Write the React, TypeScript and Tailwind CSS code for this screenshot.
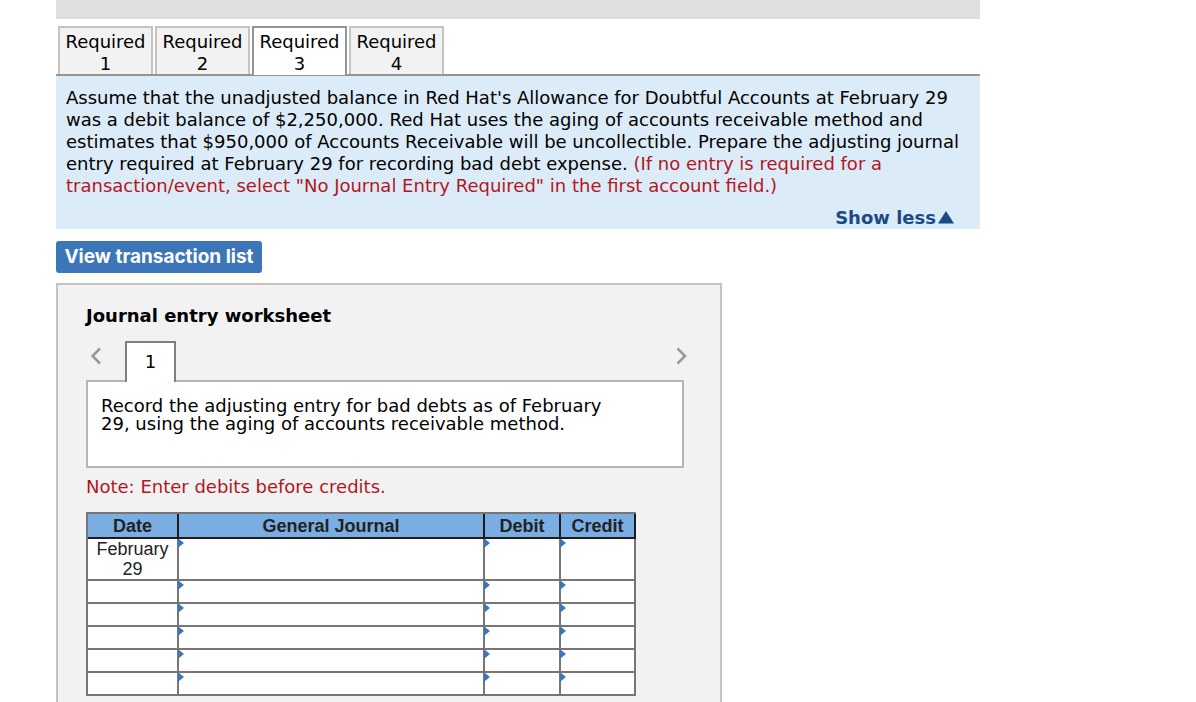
import { useState } from 'react';
import clsx from 'clsx';

const TABS = [1, 2, 3, 4];

const ROWS = ['February 29', '', '', '', '', ''];

const FIELDS = ['General Journal', 'Debit', 'Credit'];

const Tabs: React.FC<{ current: number; onSelect: (n: number) => void }> = ({ current, onSelect }) => (
  <div role="tablist" className="mt-[7px] flex h-[50px] items-start gap-0.5 border-b-2 border-[#949494] pl-0.5">
    {TABS.map((n) => (
      <button
        key={n}
        type="button"
        role="tab"
        aria-selected={n === current}
        onClick={() => onSelect(n)}
        className={clsx(
          'w-[95px] border-2 border-b-0 pt-[3px] text-center leading-[22px]',
          n === current ? 'relative h-[49px] border-[#949494] bg-white' : 'h-12 border-[#c4c4c4] bg-[#f2f2f2]'
        )}
      >
        Required
        <br />
        {n}
      </button>
    ))}
  </div>
);

const Instructions: React.FC = () => (
  <div className="bg-[#dbecf8] px-2.5 pt-[11px] leading-[22px]">
    <p>
      Assume that the unadjusted balance in Red Hat's Allowance for Doubtful Accounts at February 29 was a debit balance
      of $2,250,000. Red Hat uses the aging of accounts receivable method and estimates that $950,000 of Accounts
      Receivable will be uncollectible. Prepare the adjusting journal entry required at February 29 for recording bad
      debt expense.{' '}
      <span className="text-[#b3161e]">
        (If no entry is required for a transaction/event, select "No Journal Entry Required" in the first account
        field.)
      </span>
    </p>
    <div className="mt-2.5 flex justify-end pr-4">
      <button type="button" className="flex items-center gap-0.5 font-bold text-[#1b4a84]">
        Show less
        <svg width="16" height="16" viewBox="0 0 16 16" fill="currentColor" aria-hidden="true">
          <path d="M8 1 16 13.500H0z" />
        </svg>
      </button>
    </div>
  </div>
);

const Chevron: React.FC<{ d: string }> = ({ d }) => (
  <svg width="12" height="18" viewBox="0 0 12 18" fill="none" stroke="#999" strokeWidth="2.5" aria-hidden="true">
    <path d={d} />
  </svg>
);

const JournalTable: React.FC = () => (
  <table className="mt-3.5 w-[550px] table-fixed border-separate border-spacing-0 border-t-2 border-l-2 border-[#767676] bg-white font-['Liberation_Sans',Arial,sans-serif] leading-5 text-[#222]">
    <colgroup>
      <col className="w-[91px]" />
      <col />
      <col className="w-[76px]" />
      <col className="w-[75px]" />
    </colgroup>
    <thead>
      <tr className="h-[25px] bg-[#7aade2]">
        {['Date', ...FIELDS].map((title) => (
          <th key={title} scope="col" className="border-r-2 border-b-2 border-[#1c1c1c] p-0">
            {title}
          </th>
        ))}
      </tr>
    </thead>
    <tbody>
      {ROWS.map((date, i) => (
        <tr key={i} className="h-[23px]">
          <td className="border-r-2 border-b-2 border-[#767676] p-0 px-1 text-center">{date}</td>
          {FIELDS.map((field) => (
            <td key={field} className="relative border-r-2 border-b-2 border-[#767676] p-0">
              <svg
                width="6"
                height="8"
                viewBox="0 0 6 8"
                fill="#3c76b8"
                aria-hidden="true"
                className="absolute top-0 -left-px"
              >
                <path d="M0 0h1l5 4-5 4H0z" />
              </svg>
              <input
                type="text"
                aria-label={`${field}, row ${i + 1}`}
                className="block h-5 w-full bg-transparent px-2 outline-none"
              />
            </td>
          ))}
        </tr>
      ))}
    </tbody>
  </table>
);

const Worksheet: React.FC = () => (
  <section className="mt-2.5 w-full max-w-[666px] flex-1 border-2 border-b-0 border-[#c4c4c4] bg-[#f2f2f2] pt-5 pr-9 pl-7">
    <h2 className="leading-[22px] font-bold">Journal entry worksheet</h2>
    <div className="mt-3.5 flex items-start">
      <button type="button" aria-label="Previous entry" className="mt-1.5 ml-1">
        <Chevron d="M10 1.500 2.500 9l7.500 7.500" />
      </button>
      <button
        type="button"
        className="relative -mb-0.5 ml-[23px] h-[41px] w-[51px] border-2 border-b-0 border-[#808080] bg-white pb-0.5"
      >
        1
      </button>
      <button type="button" aria-label="Next entry" className="mt-1.5 -mr-1 ml-auto">
        <Chevron d="M1.500 1.500 9 9l-7.500 7.500" />
      </button>
    </div>
    <div className="min-h-[88px] border-2 border-[#b5b5b5] bg-white px-[13px] pt-[15px]">
      <p className="max-w-[520px] leading-[18px]">
        Record the adjusting entry for bad debts as of February 29, using the aging of accounts receivable method.
      </p>
    </div>
    <p className="mt-2 leading-[22px] text-[#b3161e]">Note: Enter debits before credits.</p>
    <JournalTable />
  </section>
);

export default function App() {
  const [current, setCurrent] = useState(3);

  return (
    <main className="flex min-h-screen flex-col bg-white pl-14 font-['DejaVu_Sans',Verdana,sans-serif] text-[18px] text-black">
      <div className="w-full max-w-[924px]">
        <div className="h-[19px] bg-[#dfdfdf]" />
        <Tabs current={current} onSelect={setCurrent} />
        <Instructions />
      </div>
      <button
        type="button"
        className="mt-3 h-8 min-w-[206px] self-start rounded-[3px] bg-[#3c76b8] px-[7px] font-['Inter',sans-serif] text-[19px] font-bold text-white"
      >
        View transaction list
      </button>
      <Worksheet />
    </main>
  );
}
